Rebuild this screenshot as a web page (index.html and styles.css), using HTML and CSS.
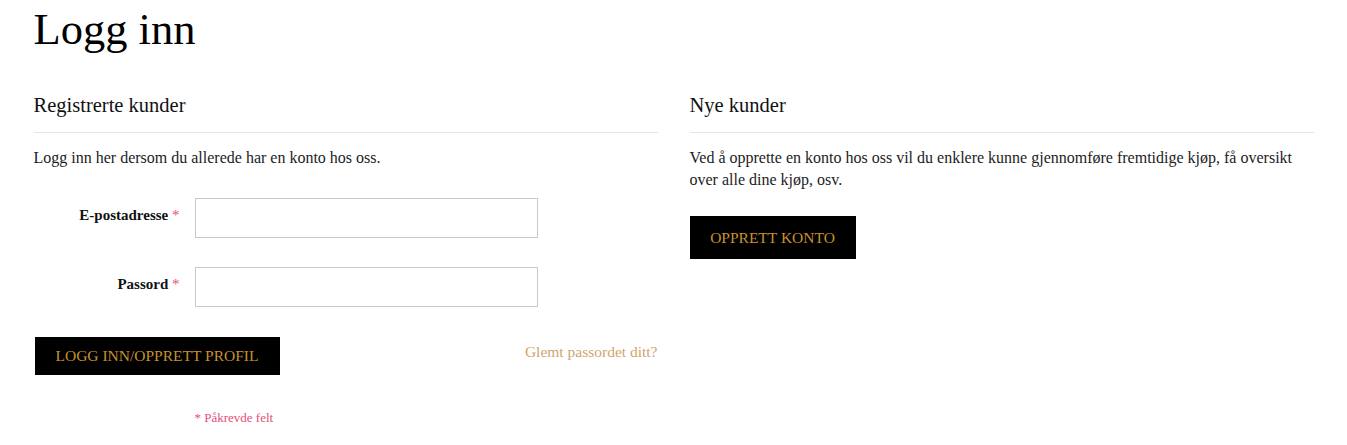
FILE: index.html
```html
<!DOCTYPE html>
<html lang="no">
<head>
<meta charset="utf-8">
<title>Logg inn</title>
<link rel="stylesheet" href="styles.css">
</head>
<body>
<main class="page">
  <h1 class="page-title">Logg inn</h1>
  <div class="columns">
    <section class="block">
      <h2 class="block-title">Registrerte kunder</h2>
      <p class="block-text">Logg inn her dersom du allerede har en konto hos oss.</p>
      <form class="login-form">
        <div class="field">
          <label class="field-label">E-postadresse <span class="req">*</span></label>
          <input class="field-input" type="email">
        </div>
        <div class="field">
          <label class="field-label">Passord <span class="req">*</span></label>
          <input class="field-input" type="password">
        </div>
        <div class="actions">
          <button type="button" class="btn btn-login">LOGG INN/OPPRETT PROFIL</button>
          <a class="forgot" href="#">Glemt passordet ditt?</a>
        </div>
        <div class="required-note">* Påkrevde felt</div>
      </form>
    </section>
    <section class="block">
      <h2 class="block-title">Nye kunder</h2>
      <p class="block-text block-text-narrow">Ved å opprette en konto hos oss vil du enklere kunne gjennomføre fremtidige kjøp, få oversikt over alle dine kjøp, osv.</p>
      <button type="button" class="btn btn-create">OPPRETT KONTO</button>
    </section>
  </div>
</main>
</body>
</html>
```
FILE: styles.css
```css
* { box-sizing: border-box; }
html, body { margin: 0; padding: 0; background: #fff; }
body {
  font-family: "Liberation Serif", "DejaVu Serif", serif;
  color: #1c1c1c;
}
.page {
  max-width: 1280px;
  margin: 0 auto;
}
.page-title {
  margin: 0;
  padding-top: 5px;
  font-size: 44.5px;
  font-weight: normal;
  line-height: 48px;
  color: #000;
}
.columns {
  display: flex;
  gap: 32px;
  margin-top: 39px;
}
.block {
  flex: 1 1 0;
  min-width: 0;
}
.block-title {
  margin: 0;
  font-size: 20.5px;
  font-weight: normal;
  line-height: 26px;
  padding-bottom: 14px;
  border-bottom: 1px solid #e6e6e6;
  color: #111;
}
.block-text {
  margin: 14px 0 0;
  font-size: 16px;
  line-height: 22px;
  color: #1c1c1c;
}
.block-text-narrow { max-width: 610px; }
.login-form {
  margin-top: 29px;
  display: flex;
  flex-direction: column;
}
.field {
  display: flex;
  align-items: flex-start;
  margin-bottom: 29px;
}
.field-label {
  width: 146px;
  margin-right: 15px;
  text-align: right;
  font-weight: bold;
  font-size: 15px;
  line-height: 20px;
  padding-top: 7px;
  color: #111;
}
.req { color: #e8507a; font-weight: normal; }
.field-input {
  width: 343px;
  height: 40px;
  border: 1px solid #c9c9c9;
  border-radius: 0;
  padding: 0 10px;
  font: inherit;
  background: #fff;
}
.actions {
  display: flex;
  justify-content: space-between;
  align-items: center;
  margin-top: 1px;
}
.btn {
  font-family: "Liberation Serif", "DejaVu Serif", serif;
  background: #000;
  color: #c8922c;
  border: 0;
  border-radius: 0;
  font-size: 15.5px;
  cursor: pointer;
}
.btn-login {
  width: 245px;
  height: 38px;
  margin-left: 1px;
  padding: 0;
}
.forgot {
  font-size: 15.5px;
  color: #cfa56e;
  text-decoration: none;
  margin-top: -8px;
}
.required-note {
  margin-top: 34px;
  margin-left: 161px;
  font-size: 13px;
  line-height: 18px;
  color: #e4507a;
}
.btn-create {
  margin-top: 25px;
  width: 166px;
  height: 43px;
  padding: 0;
}
```
